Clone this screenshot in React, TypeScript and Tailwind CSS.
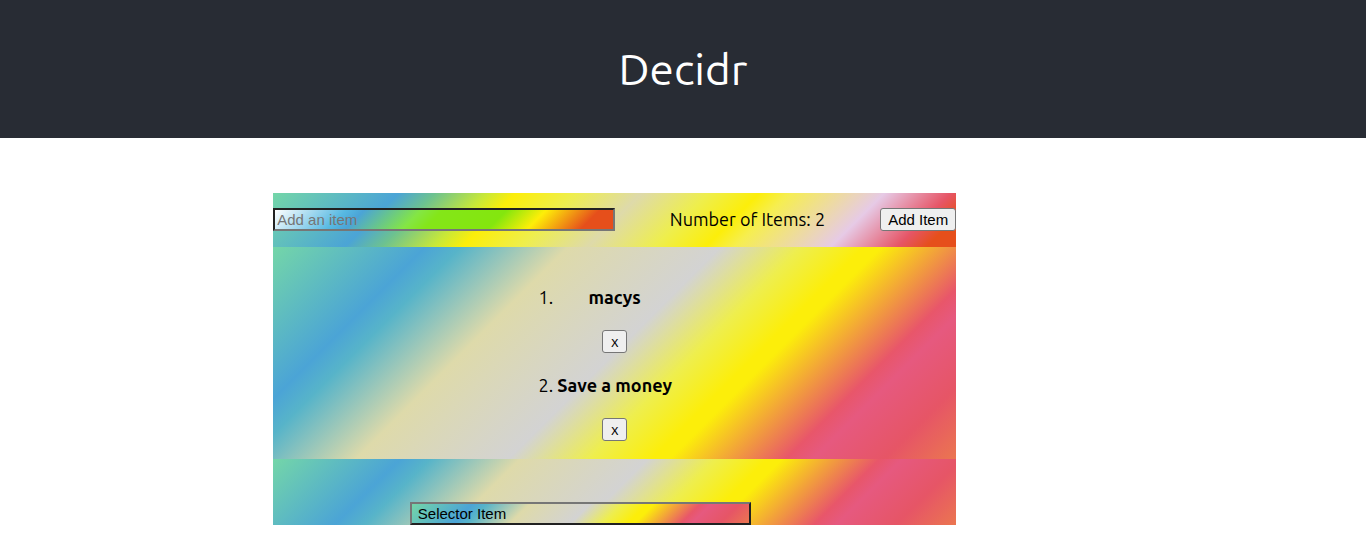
import { FormEvent, useState } from "react";

const panelGradient =
  "bg-[linear-gradient(135deg,#74d6a8_0%,#4ba4d6_17%,#57b4c9_21%,#dedaaa_33%,#d3d3d3_50%,#eeee4e_59%,#fcee0a_66%,#fcee0a_68%,#e8566a_81%,#e6597f_84%,#e65566_92%,#eb7650_100%)]";

const toolbarGradient =
  "bg-[linear-gradient(135deg,#74d6a8_0%,#4ba4d6_17%,#6dc290_22%,#c8e838_29%,#fcee0a_33%,#eeee4e_41%,#dedaaa_50%,#eeee4e_59%,#fcee0a_66%,#f6ee50_70%,#e6cae6_83%,#e65566_92%,#e64f1b_96%,#e64f1b_100%)]";

const inputGradient =
  "bg-[linear-gradient(135deg,#ffffff_0%,#57b9e2_20%,#4ba4d6_25%,#84e644_41%,#84e618_47%,#84e60e_65%,#feee08_76%,#e64f1b_91%,#e64f1b_100%)]";

const smallButton =
  "h-[23px] rounded-[3px] border border-[#767676] bg-[#efefef] px-[7px] text-black hover:bg-[#e5e5e5]";

export default function App() {
  const [items, setItems] = useState<string[]>(["macys", "Save a money"]);
  const [draft, setDraft] = useState("");
  const [selected, setSelected] = useState("");

  const addItem = (event: FormEvent) => {
    event.preventDefault();
    if (!draft.trim()) return;
    setItems([...items, draft.trim()]);
    setDraft("");
  };

  return (
    <div className="font-[Ubuntu,'Noto_Sans',sans-serif] text-[18px] leading-5 text-black">
      <header className="bg-[#282c34] py-10 text-center text-white">
        <h1 className="text-[44px] leading-[58px] font-normal">Decidr</h1>
      </header>

      <main className="mt-[55px] ml-[20%] w-1/2">
        <form
          onSubmit={addItem}
          className={`flex items-start justify-between pt-[15px] pb-4 ${toolbarGradient}`}
        >
          <input
            type="text"
            aria-label="Add an item"
            placeholder="Add an item"
            value={draft}
            onChange={(event) => setDraft(event.target.value)}
            className={`h-[23px] w-1/2 border-2 border-t-[#212121] border-r-[#767676] border-b-[#767676] border-l-[#212121] px-[2px] font-['Liberation_Sans',sans-serif] text-[15px] placeholder:text-[#757575] ${inputGradient}`}
          />
          <span className="leading-[22px]">Number of Items: {items.length}</span>
          <button
            type="submit"
            className={`font-['Liberation_Sans',sans-serif] text-[15px] ${smallButton}`}
          >
            Add Item
          </button>
        </form>

        <section className={`pt-10 pb-[18px] ${panelGradient}`}>
          <ol className="mx-auto flex w-fit list-decimal flex-col gap-[22px] text-center">
            {items.map((item, index) => (
              <li key={index}>
                <b className="mb-[23px] block">{item}</b>
                <button
                  type="button"
                  aria-label={`Remove ${item}`}
                  onClick={() => setItems(items.filter((_, i) => i !== index))}
                  className={`mx-auto block min-w-[25px] text-[15px] leading-[18px] ${smallButton}`}
                >
                  x
                </button>
              </li>
            ))}
          </ol>
        </section>

        <section className={`pt-[43px] ${panelGradient}`}>
          <button
            type="button"
            onClick={() => setSelected(items[Math.floor(Math.random() * items.length)] ?? "")}
            className={`ml-[20%] block h-[23px] w-1/2 border-2 border-t-[#767676] border-r-[#212121] border-b-[#212121] border-l-[#767676] px-[6px] text-left font-['Liberation_Sans',sans-serif] text-[15px] leading-[19px] ${panelGradient}`}
          >
            Selector Item
          </button>
        </section>
        {selected && <p className="py-4 text-center">{selected}</p>}
      </main>
    </div>
  );
}
